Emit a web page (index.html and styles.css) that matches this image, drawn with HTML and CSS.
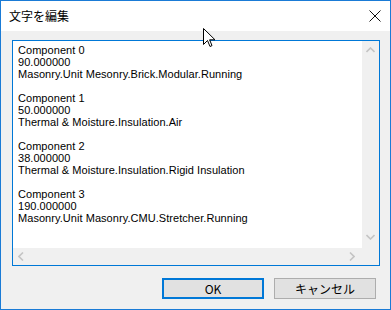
FILE: index.html
```html
<!DOCTYPE html>
<html>
<head>
<meta charset="utf-8">
<link rel="stylesheet" href="styles.css">
</head>
<body>
<div class="window">
  <div class="titlebar">
    <span class="title">文字を編集</span>
    <svg class="close" width="12" height="12" viewBox="0 0 12 12"><path d="M0.5 0.5 L11.5 11.5 M11.5 0.5 L0.5 11.5" stroke="#111" stroke-width="1" fill="none"/></svg>
  </div>
  <div class="content">
    <div class="editor">
      <div class="textrow">
        <div class="text">Component 0
90.000000
Masonry.Unit Mesonry.Brick.Modular.Running

Component 1
50.000000
Thermal &amp; Moisture.Insulation.Air

Component 2
38.000000
Thermal &amp; Moisture.Insulation.Rigid Insulation

Component 3
190.000000
Masonry.Unit Masonry.CMU.Stretcher.Running</div>
        <div class="vscroll">
          <svg width="9" height="6" viewBox="0 0 9 6"><path d="M0.5 5 L4.5 1 L8.5 5" stroke="#c4c4c4" stroke-width="1.6" fill="none"/></svg>
          <svg width="9" height="6" viewBox="0 0 9 6"><path d="M0.5 1 L4.5 5 L8.5 1" stroke="#c4c4c4" stroke-width="1.6" fill="none"/></svg>
        </div>
      </div>
      <div class="hrow">
        <div class="hscroll">
          <svg width="6" height="9" viewBox="0 0 6 9"><path d="M5 0.5 L1 4.5 L5 8.5" stroke="#c4c4c4" stroke-width="1.6" fill="none"/></svg>
          <svg width="6" height="9" viewBox="0 0 6 9"><path d="M1 0.5 L5 4.5 L1 8.5" stroke="#c4c4c4" stroke-width="1.6" fill="none"/></svg>
        </div>
        <div class="corner"></div>
      </div>
    </div>
    <div class="buttons">
      <div class="btn btn-default">OK</div>
      <div class="btn">キャンセル</div>
    </div>
  </div>
  <svg class="cursor" width="13" height="21" viewBox="0 0 13 21"><path d="M0.5 0.5 L0.5 16.5 L4.5 12.5 L7 18.5 L9 17.6 L6.6 11.8 L12 11.8 Z" fill="#fff" stroke="#000" stroke-width="1" stroke-linejoin="miter"/></svg>
</div>
</body>
</html>
```
FILE: styles.css
```css
* { box-sizing: border-box; }
html, body { margin: 0; padding: 0; background: #fff; }
.window {
  position: relative;
  width: 391px;
  height: 310px;
  border: 1px solid #1a7bd6;
  background: #f0f0f0;
  display: flex;
  flex-direction: column;
  font-family: "Noto Sans CJK JP", "Liberation Sans", sans-serif;
}
.titlebar {
  height: 30px;
  background: #fff;
  display: flex;
  align-items: center;
  justify-content: space-between;
  padding: 0 9px 0 8px;
}
.title {
  font-size: 12px;
  color: #000;
  margin-top: -1px;
}
.close { margin-right: 0; }
.content {
  flex: 1;
  display: flex;
  flex-direction: column;
  padding: 9px 10px 0 11px;
}
.editor {
  width: 368px;
  height: 226px;
  border: 1px solid #0078d7;
  background: #fff;
  display: flex;
  flex-direction: column;
}
.textrow { flex: 1; display: flex; min-height: 0; }
.text {
  flex: 1;
  white-space: pre;
  overflow: hidden;
  font-family: "Liberation Sans", "Noto Sans CJK JP", sans-serif;
  font-size: 11px;
  line-height: 12px;
  letter-spacing: 0.05px;
  color: #000;
  padding: 3px 0 0 5px;
}
.vscroll {
  width: 17px;
  background: #f0f0f0;
  display: flex;
  flex-direction: column;
  justify-content: space-between;
  align-items: center;
  padding: 6px 0 8px;
}
.hrow { height: 17px; display: flex; }
.hscroll {
  flex: 1;
  background: #f0f0f0;
  display: flex;
  justify-content: space-between;
  align-items: center;
  padding: 0 7px 0 5px;
}
.corner { width: 17px; background: #f0f0f0; }
.buttons {
  display: flex;
  justify-content: flex-end;
  gap: 10px;
  margin-top: 12px;
  padding-right: 4px;
}
.btn {
  width: 102px;
  height: 21px;
  background: #e1e1e1;
  border: 1px solid #adadad;
  font-size: 12px;
  color: #000;
  display: flex;
  align-items: center;
  justify-content: center;
}
.btn-default { border: 2px solid #0078d7; }
.cursor { position: absolute; left: 202px; top: 27px; }
```
